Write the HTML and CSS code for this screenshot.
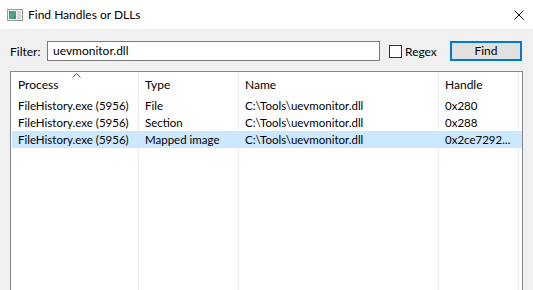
FILE: index.html
```html
<!DOCTYPE html>
<html>
<head>
<meta charset="utf-8">
<link rel="stylesheet" href="styles.css">
</head>
<body>
<div class="window">
  <div class="titlebar">
    <svg class="app-icon" width="16" height="12" viewBox="0 0 16 12">
      <defs>
        <linearGradient id="g" x1="0" y1="0" x2="1" y2="1">
          <stop offset="0" stop-color="#3f8fb8"/>
          <stop offset="0.5" stop-color="#4fae6a"/>
          <stop offset="1" stop-color="#2f7fb0"/>
        </linearGradient>
      </defs>
      <rect x="0.5" y="0.5" width="15" height="11" fill="#f4f4f4" stroke="#9a9a9a"/>
      <rect x="2" y="2" width="7" height="8" fill="url(#g)"/>
      <rect x="10" y="2" width="4" height="8" fill="#d8d8d8"/>
    </svg>
    <span class="title">Find Handles or DLLs</span>
    <svg class="close" width="10" height="10" viewBox="0 0 10 10">
      <path d="M0.5 0.5 L9.5 9.5 M9.5 0.5 L0.5 9.5" stroke="#111" stroke-width="1"/>
    </svg>
  </div>
  <div class="content">
    <div class="filter-row">
      <span class="label">Filter:</span>
      <div class="input">uevmonitor.dll</div>
      <span class="checkbox"></span>
      <span class="check-label">Regex</span>
      <div class="button">Find</div>
    </div>
    <div class="list">
      <div class="row header">
        <div class="cell sorted">Process
          <svg class="sort" width="9" height="5" viewBox="0 0 9 5"><polyline points="0.5,4.5 4.5,0.5 8.5,4.5" fill="none" stroke="#555" stroke-width="1"/></svg>
        </div>
        <div class="cell">Type</div>
        <div class="cell">Name</div>
        <div class="cell">Handle</div>
        <div class="cell"></div>
      </div>
      <div class="row item">
        <div class="cell">FileHistory.exe (5956)</div>
        <div class="cell">File</div>
        <div class="cell">C:\Tools\uevmonitor.dll</div>
        <div class="cell">0x280</div>
        <div class="cell"></div>
      </div>
      <div class="row item">
        <div class="cell">FileHistory.exe (5956)</div>
        <div class="cell">Section</div>
        <div class="cell">C:\Tools\uevmonitor.dll</div>
        <div class="cell">0x288</div>
        <div class="cell"></div>
      </div>
      <div class="row item selected">
        <div class="cell">FileHistory.exe (5956)</div>
        <div class="cell">Mapped image</div>
        <div class="cell">C:\Tools\uevmonitor.dll</div>
        <div class="cell">0x2ce7292...</div>
        <div class="cell"></div>
      </div>
      <div class="row filler">
        <div class="cell"></div>
        <div class="cell"></div>
        <div class="cell"></div>
        <div class="cell"></div>
        <div class="cell"></div>
      </div>
    </div>
  </div>
</div>
</body>
</html>
```
FILE: styles.css
```css
* { box-sizing: border-box; }
html, body { margin: 0; padding: 0; }
body {
  width: 533px;
  height: 290px;
  overflow: hidden;
  font-family: Lato, "Noto Sans", sans-serif;
  font-size: 12px;
  color: #000;
  background: #f0f0f0;
}
.window { display: flex; flex-direction: column; height: 290px; }
.titlebar {
  height: 29px;
  background: #fff;
  display: flex;
  align-items: center;
  padding-left: 7px;
  flex: none;
}
.app-icon { display: block; }
.title { margin-left: 5px; font-size: 12px; }
.close { margin-left: auto; margin-right: 9px; margin-top: 1px; }
.content {
  flex: 1;
  padding: 12px 11px 0 10px;
  display: flex;
  flex-direction: column;
  min-height: 0;
}
.filter-row {
  display: flex;
  align-items: center;
  height: 20px;
}
.label { width: 37px; }
.input {
  width: 333px;
  height: 20px;
  border: 1px solid #7a7a7a;
  background: #fff;
  padding-left: 5px;
  line-height: 18px;
}
.checkbox {
  width: 13px;
  height: 13px;
  border: 1px solid #333;
  background: #fff;
  margin-left: 9px;
}
.check-label { margin-left: 3px; }
.button {
  margin-left: auto;
  width: 72px;
  height: 20px;
  border: 2px solid #0078d7;
  background: #e1e1e1;
  text-align: center;
  line-height: 16px;
}
.list {
  margin-top: 10px;
  width: 513px;
  flex: 1;
  border: 1px solid #828790;
  border-bottom: none;
  background: #fff;
  display: flex;
  flex-direction: column;
  padding-left: 1px;
}
.row {
  display: grid;
  grid-template-columns: 127px 100px 200px 80px 2px;
  height: 17px;
  flex: none;
}
.row .cell {
  border-right: 1px solid #e8ecf2;
  padding-left: 6px;
  line-height: 17px;
  white-space: nowrap;
  overflow: hidden;
}
.item .cell { font-size: 11.5px; }
.row .cell:last-child { border-right: none; }
.header { height: 25px; }
.header .cell { line-height: 25px; position: relative; }
.sorted .sort { position: absolute; left: 60px; top: 1px; }
.selected { background: #cce8ff; }
.selected .cell { border-right-color: #cce8ff; }
.filler { flex: 1; height: auto; }
```
